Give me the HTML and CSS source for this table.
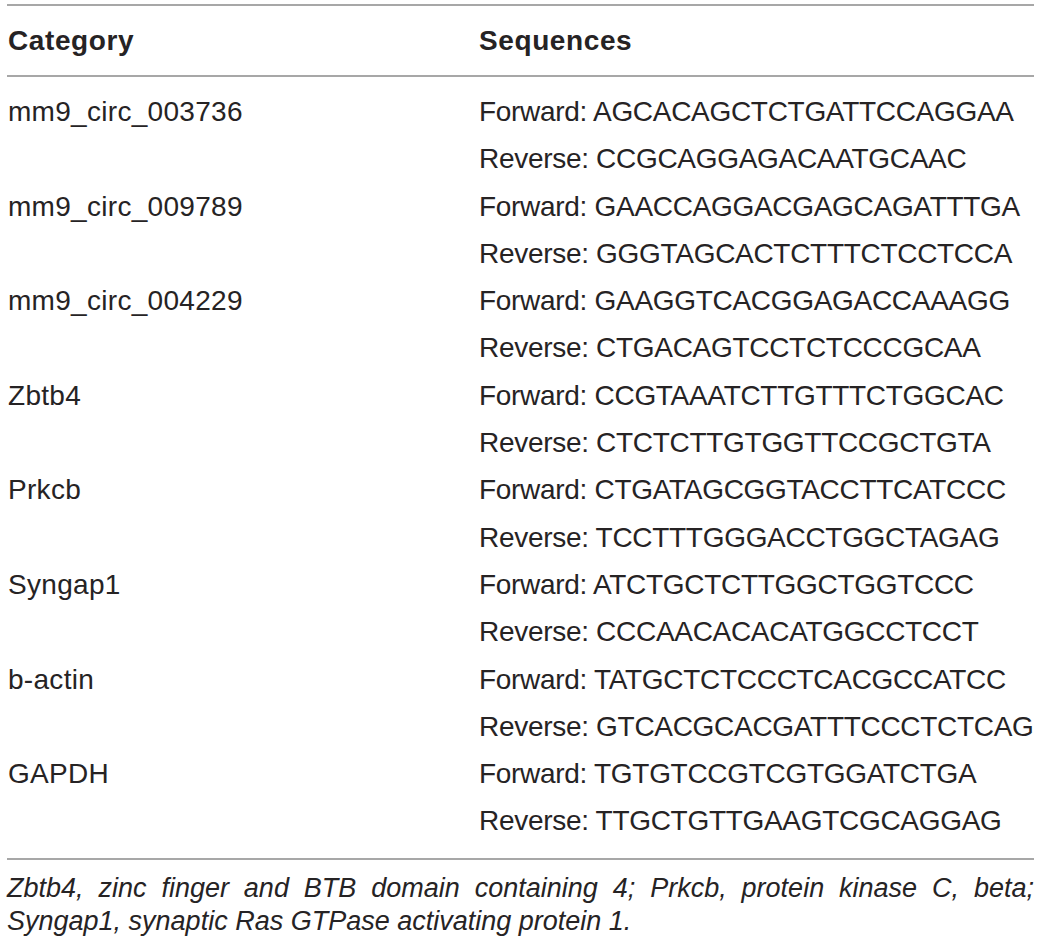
FILE: index.html
```html
<!DOCTYPE html>
<html>
<head>
<meta charset="utf-8">
<link rel="stylesheet" href="styles.css">
</head>
<body>
<div class="wrap">
  <table class="primers">
    <colgroup><col class="c1"><col class="c2"></colgroup>
    <thead>
      <tr><th>Category</th><th>Sequences</th></tr>
    </thead>
    <tbody>
      <tr class="first"><td>mm9_circ_003736</td><td>Forward: AGCACAGCTCTGATTCCAGGAA</td></tr>
      <tr><td></td><td>Reverse: CCGCAGGAGACAATGCAAC</td></tr>
      <tr><td>mm9_circ_009789</td><td>Forward: GAACCAGGACGAGCAGATTTGA</td></tr>
      <tr><td></td><td>Reverse: GGGTAGCACTCTTTCTCCTCCA</td></tr>
      <tr><td>mm9_circ_004229</td><td>Forward: GAAGGTCACGGAGACCAAAGG</td></tr>
      <tr><td></td><td>Reverse: CTGACAGTCCTCTCCCGCAA</td></tr>
      <tr><td>Zbtb4</td><td>Forward: CCGTAAATCTTGTTTCTGGCAC</td></tr>
      <tr><td></td><td>Reverse: CTCTCTTGTGGTTCCGCTGTA</td></tr>
      <tr><td>Prkcb</td><td>Forward: CTGATAGCGGTACCTTCATCCC</td></tr>
      <tr><td></td><td>Reverse: TCCTTTGGGACCTGGCTAGAG</td></tr>
      <tr><td>Syngap1</td><td>Forward: ATCTGCTCTTGGCTGGTCCC</td></tr>
      <tr><td></td><td>Reverse: CCCAACACACATGGCCTCCT</td></tr>
      <tr><td>b-actin</td><td>Forward: TATGCTCTCCCTCACGCCATCC</td></tr>
      <tr><td></td><td>Reverse: GTCACGCACGATTTCCCTCTCAG</td></tr>
      <tr><td>GAPDH</td><td>Forward: TGTGTCCGTCGTGGATCTGA</td></tr>
      <tr class="last"><td></td><td>Reverse: TTGCTGTTGAAGTCGCAGGAG</td></tr>
    </tbody>
  </table>
  <p class="note"><i>Zbtb4, zinc finger and BTB domain containing 4; Prkcb, protein kinase C, beta; Syngap1, synaptic Ras GTPase activating protein 1.</i></p>
</div>
</body>
</html>
```

FILE: styles.css
```css
html, body {
  margin: 0;
  padding: 0;
  background: #ffffff;
}
body {
  font-family: "Liberation Sans", Arial, sans-serif;
  color: #262324;
}
.wrap {
  padding: 4px 7px 0 7px;
  width: 1027px;
}
.primers {
  width: 100%;
  table-layout: fixed;
  border-collapse: collapse;
  font-size: 28px;
}
.primers col.c1 {
  width: 471px;
}
.primers thead tr {
  border-top: 2px solid #a7a7a7;
  border-bottom: 2px solid #a7a7a7;
}
.primers th {
  text-align: left;
  font-weight: bold;
  letter-spacing: 0.6px;
  height: 69px;
  padding: 0 0 0 1px;
  vertical-align: middle;
}
.primers td {
  padding: 0 0 0 1px;
  height: 47.3px;
  line-height: 47.3px;
  letter-spacing: -0.3px;
  white-space: nowrap;
}
.primers td:first-child {
  letter-spacing: 0.3px;
}
.primers tr.first td {
  padding-top: 11px;
}
.primers tr.last td {
  padding-bottom: 13px;
}
.primers tbody tr.last {
  border-bottom: 2px solid #a7a7a7;
}
.note {
  margin: 12px 0 0 0;
  font-size: 27px;
  line-height: 33px;
  text-align: justify;
}
```
